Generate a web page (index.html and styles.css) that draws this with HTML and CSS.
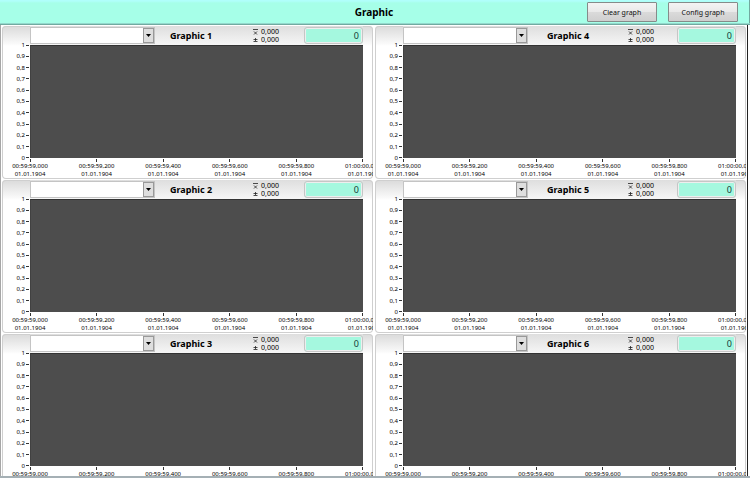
FILE: index.html
```
<!DOCTYPE html>
<html lang="en">
<head>
<meta charset="utf-8">
<title>Graphic</title>
<link rel="stylesheet" href="styles.css">
</head>
<body>
<div class="window">
  <header class="toolbar">
    <h1 class="toolbar-title">Graphic</h1>
    <div class="toolbar-actions">
      <button type="button" class="btn">Clear graph</button>
      <button type="button" class="btn">Config graph</button>
    </div>
  </header>
  <main class="panels" id="panels"></main>
</div>
<template id="panel-template">
  <section class="panel">
    <div class="panel-head">
      <div class="combo">
        <select class="combo-select"><option></option></select>
        <svg class="combo-arrow" viewBox="0 0 11 15" aria-hidden="true"><rect class="arrow-face" x=".5" y=".5" width="10" height="14"/><path class="arrow-mark" d="M3 6h5L5.500 9z"/></svg>
      </div>
      <h2 class="panel-title"></h2>
      <div class="stats">
        <svg class="stats-icon" viewBox="0 0 5 14" aria-hidden="true"><path d="M0 .5h5M1 2.500l3 3M4 2.500l-3 3M.5 10.500h4M2.500 9v3M.5 12.500h4"/></svg>
        <div class="stats-values"><span>0,000</span><span>0,000</span></div>
      </div>
      <input class="indicator" type="text" value="0" readonly>
    </div>
    <div class="y-axis"></div>
    <div class="plot"></div>
    <div class="x-axis"></div>
  </section>
</template>
<script src="panels.js"></script>
</body>
</html>
```
FILE: styles.css
```
* { box-sizing: border-box; }
body {
  margin: 0;
  background: #fff;
  color: #000;
  font-family: "Noto Sans", "Open Sans", sans-serif;
}
.window {
  display: flex;
  flex-direction: column;
  height: 100vh;
  overflow: hidden;
  border-bottom: 2px solid #a5b0b5;
}
.toolbar {
  display: grid;
  grid-template-columns: 1fr auto 1fr;
  align-items: center;
  flex: none;
  height: 25px;
  padding: 0 12px 0 10px;
  background: linear-gradient(#b0fffb 0 1px, #a6ffe8 3px);
  border-bottom: 1px solid #71aaa0;
  box-shadow: inset 0 -1px #92d9cc, inset -1px 0 #71aaa0;
}
.toolbar-title {
  grid-column: 2;
  margin: 0;
  font-size: 10px;
  line-height: 16px;
}
.toolbar-actions {
  display: flex;
  justify-content: flex-end;
  gap: 11px;
}
.btn {
  width: 70px;
  height: 20px;
  padding: 0;
  border: 1px solid #858b8a;
  border-radius: 1px;
  background: linear-gradient(#f3f3f3, #e9e9e9 48%, #dadada 52%, #cfcfcf);
  color: #111;
  font-family: inherit;
  font-size: 7px;
}
.panels {
  display: grid;
  grid-template-columns: 1fr 1fr;
  grid-template-rows: repeat(3, 153px);
  grid-auto-flow: column;
  gap: 1px 2px;
  flex: 1;
  min-height: 0;
  margin-right: 2px;
  padding: 1px 1px 0 1px;
  border-left: 1px solid #a6a6a6;
  border-right: 1px solid #222;
}
.panel {
  display: grid;
  grid-template-columns: 28px 1fr 10px;
  grid-template-rows: 19px 113px 21px;
  overflow: hidden;
  border-radius: 4px;
  box-shadow: inset 0 0 0 1px #cfcfcf;
  background: linear-gradient(#dadada, #fafafa 18px, #fff 20px);
}
.panel-head {
  grid-column: 2;
  display: grid;
  grid-template-columns: 140px 83px 1fr 59px;
  align-items: center;
  background: linear-gradient(#dedede, #f6f6f6);
}
.panel-offset .panel-head { grid-template-columns: 144px 81px 1fr 59px; }
.combo {
  display: grid;
  width: 125px;
  height: 17px;
  border: 1px solid #c4c4c4;
  background: #fff;
}
.combo-select, .combo-arrow { grid-area: 1 / 1; }
.combo-select {
  width: 100%;
  height: 100%;
  padding: 0;
  border: 0;
  appearance: none;
  background: #fff;
  font-size: 8px;
}
.combo-arrow {
  justify-self: end;
  width: 11px;
  height: 15px;
  pointer-events: none;
}
.arrow-face { fill: #dedede; stroke: #999; }
.arrow-mark { fill: #000; }
.panel-title {
  margin: 0;
  font-size: 9px;
  line-height: 12px;
}
.stats {
  display: flex;
  align-items: center;
  gap: 3px;
}
.stats-icon {
  width: 5px;
  height: 14px;
  fill: none;
  stroke: #222;
  stroke-width: 0.8;
}
.stats-values {
  display: grid;
  font-size: 7px;
  line-height: 8px;
}
.indicator {
  width: 100%;
  height: 17px;
  padding: 0 3px;
  border: 1px solid #c6c6c6;
  border-radius: 3px;
  background: #a5f8df;
  box-shadow: inset 0 0 0 1px #eee;
  color: #123c38;
  font-family: inherit;
  font-size: 9px;
  text-align: right;
}
.y-axis {
  grid-column: 1;
  grid-row: 2;
  display: flex;
  flex-direction: column;
  justify-content: space-between;
  height: 121px;
  margin-top: -4px;
}
.y-label {
  display: flex;
  align-items: center;
  justify-content: flex-end;
  gap: 1px;
  padding-right: 1px;
  font-size: 6px;
  line-height: 8px;
}
.y-label::after {
  content: "";
  width: 3px;
  height: 1px;
  background: #333;
}
.plot {
  grid-column: 2;
  background: #4d4d4d;
  border-top: 1px solid #333;
  border-left: 1px solid #414141;
}
.x-axis {
  grid-column: 1 / -1;
  display: flex;
  justify-content: space-between;
  margin: 0 -10px 0 8px;
  padding-top: 1px;
}
.x-label {
  display: flex;
  flex-direction: column;
  align-items: center;
  width: 40px;
  font-size: 6px;
  line-height: 8px;
  white-space: nowrap;
}
.x-label::before {
  content: "";
  width: 1px;
  height: 3px;
  background: #333;
}
```
FILE: panels.js
```
const times = ["00:59:59,000", "00:59:59,200", "00:59:59,400", "00:59:59,600", "00:59:59,800", "01:00:00,000"];
const levels = ["1", "0,9", "0,8", "0,7", "0,6", "0,5", "0,4", "0,3", "0,2", "0,1", "0"];
const host = document.getElementById("panels");
const template = document.getElementById("panel-template");

function addLabel(parent, className, lines) {
  const label = document.createElement("div");
  label.className = className;
  for (const line of lines) {
    const span = document.createElement("span");
    span.textContent = line;
    label.append(span);
  }
  parent.append(label);
}

for (let i = 1; i <= 6; i++) {
  const panel = template.content.cloneNode(true);
  const name = "Graphic " + i;
  if (i > 3) panel.querySelector(".panel").classList.add("panel-offset");
  panel.querySelector(".panel-title").textContent = name;
  panel.querySelector(".combo-select").setAttribute("aria-label", name + " channel");
  panel.querySelector(".indicator").setAttribute("aria-label", name + " value");
  levels.forEach(v => addLabel(panel.querySelector(".y-axis"), "y-label", [v]));
  times.forEach(t => addLabel(panel.querySelector(".x-axis"), "x-label", [t, "01.01.1904"]));
  host.append(panel);
}
```
